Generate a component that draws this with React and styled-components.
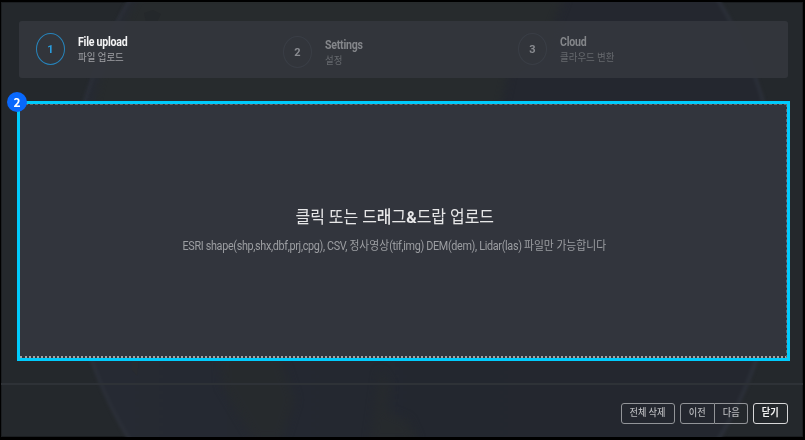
import React from "react";
import styled, { createGlobalStyle } from "styled-components";

const GlobalStyle = createGlobalStyle`
  * { box-sizing: border-box; }
  body { margin: 0; background: #000; }
`;

const Window = styled.main`
  position: relative;
  isolation: isolate;
  display: flex;
  flex-direction: column;
  width: 805px;
  height: 440px;
  border: solid #000;
  border-width: 2px 2px 3px 1px;
  background: #24282c;
  box-shadow: inset 0 0 0 1px #1b1e21;
  overflow: hidden;
  font-family: Roboto, "Noto Sans CJK KR", sans-serif;
`;

const Globe = styled.svg`
  position: absolute;
  z-index: -1;
  left: -1px;
  top: -2px;
`;

const Steps = styled.ol`
  display: grid;
  grid-template-columns: 247px 235px 1fr;
  width: 769px;
  height: 57px;
  margin: 19px 0 0 18px;
  padding: 0 0 0 17px;
  border-radius: 3px;
  background: rgba(51, 54, 60, 0.96);
  list-style: none;
  flex: none;
`;

const Step = styled.li`
  display: flex;
  align-items: flex-start;
  gap: 13px;
  padding-top: ${(p) => p.$top}px;
`;

const StepNumber = styled.span`
  display: flex;
  align-items: center;
  justify-content: center;
  width: 29px;
  height: 32px;
  border: ${(p) => (p.$active ? "1.5px solid #2785bd" : "1px solid #3a3e46")};
  border-radius: 50%;
  color: ${(p) => (p.$active ? "#2b9fe0" : "#898b90")};
  font-size: 11px;
  font-weight: 700;
`;

const StepText = styled.div`
  display: flex;
  flex-direction: column;
  padding-top: 2px;
`;

const StepTitle = styled.strong`
  color: ${(p) => (p.$active ? "#f4f4f5" : "#84868a")};
  font-size: 12px;
  line-height: 15px;
  font-weight: 700;
  letter-spacing: -0.25px;
  white-space: nowrap;
  transform: scaleX(0.88);
  transform-origin: left;
`;

const StepCaption = styled.span`
  color: ${(p) => (p.$active ? "#a0a1a5" : "#66696e")};
  font-size: 10.5px;
  line-height: 15px;
  white-space: nowrap;
  transform: scaleX(0.9);
  transform-origin: left;
`;

const DropArea = styled.section`
  position: relative;
  width: 773px;
  height: 260px;
  margin: 23px 0 0 16px;
  border: 3px solid #00cbfd;
  background: #32353d;
  flex: none;
`;

const DropTarget = styled.div`
  display: flex;
  flex-direction: column;
  align-items: center;
  width: 100%;
  height: 100%;
  padding: 99px 17px 0 0;
  border: 1px dashed #66686d;
  border-left: 0;
  border-bottom: 2px dotted #a5a5a5;
`;

const DropTitle = styled.h1`
  margin: 0;
  color: #e7e7e8;
  font-size: 17px;
  line-height: 26px;
  font-weight: 400;
  white-space: nowrap;
  transform: scaleX(0.938);
  b { font-weight: 500; }
  strong { font-weight: 700; }
`;

const DropCaption = styled.p`
  margin: 7px 0 0;
  color: #9c9ea2;
  font-size: 12px;
  line-height: 18px;
  white-space: nowrap;
  transform: scaleX(0.9);
`;

const Latin = styled.span`
  letter-spacing: -0.36px;
`;

const Badge = styled.span`
  position: absolute;
  left: -13px;
  top: -12px;
  width: 20px;
  height: 20px;
  border-radius: 50%;
  background: #0868fc;
  color: #fff;
  font: 700 12px/20px "Noto Sans CJK KR", sans-serif;
  text-align: center;
`;

const Footer = styled.footer`
  display: flex;
  justify-content: flex-end;
  align-items: flex-start;
  gap: 5px;
  margin-top: 22px;
  padding: 18px 15px 0 0;
  border-top: 2px solid #2e3237;
  flex: 1;
`;

const ButtonGroup = styled.div`
  display: flex;
`;

const Button = styled.button`
  display: flex;
  align-items: center;
  justify-content: center;
  width: ${(p) => p.$width}px;
  height: 21px;
  padding: 0 0 3px;
  border: 1px solid ${(p) => (p.$primary ? "#d7d7d8" : "#929498")};
  border-radius: 3px;
  background: transparent;
  color: ${(p) => (p.$primary ? "#f1f1f1" : "#b5b6b9")};
  font: ${(p) => (p.$primary ? 700 : 500)} 10px/16px "Noto Sans CJK KR", sans-serif;
  white-space: nowrap;
  ${ButtonGroup} &:first-child { border-radius: 3px 0 0 3px; }
  ${ButtonGroup} &:last-child { border-radius: 0 3px 3px 0; border-left: 0; }
`;

const ButtonLabel = styled.span`
  transform: scaleX(0.92);
`;

const steps = [
  { title: "File upload", caption: "파일 업로드", top: 12, active: true },
  { title: "Settings", caption: "설정", top: 15 },
  { title: "Cloud", caption: "클라우드 변환", top: 12 },
];

function GlobeBackdrop() {
  return (
    <Globe width="805" height="440" aria-hidden="true">
      <defs>
        <filter id="soft" colorInterpolationFilters="sRGB"><feGaussianBlur stdDeviation="1.5" /></filter>
        <filter id="land" x="-10%" y="-10%" width="120%" height="120%" colorInterpolationFilters="sRGB"><feGaussianBlur stdDeviation="4" /></filter>
        <linearGradient id="sea">
          <stop offset="0" stopColor="#262a33" />
          <stop offset="0.5" stopColor="#23272f" />
          <stop offset="1" stopColor="#24272f" />
        </linearGradient>
      </defs>
      <ellipse cx="424" cy="220" rx="356" ry="390" fill="url(#sea)" stroke="#2b2f38" strokeWidth="4" filter="url(#soft)" />
      <g fill="#272b2d" filter="url(#land)">
        <path d="M137 -5H565L545 45L510 65L500 110H92L100 76Z" />
        <path d="M220 350H278L295 400L282 440H255L222 385Z" opacity=".8" />
        <path d="M380 370L390 386L386 411L408 420L418 442H370Z" opacity=".8" />
      </g>
      <path d="M144 13l9-3 8 4-5 10-9 3z" fill="#23272a" opacity=".6" />
      <path d="M132 360l7 1-2 15-5-6z" fill="#292b2d" opacity=".5" />
    </Globe>
  );
}

export default function App() {
  return (
    <Window>
      <GlobalStyle />
      <GlobeBackdrop />
      <Steps>
        {steps.map((s, i) => (
          <Step key={s.title} $top={s.top}>
            <StepNumber $active={s.active}>{i + 1}</StepNumber>
            <StepText>
              <StepTitle $active={s.active}>{s.title}</StepTitle>
              <StepCaption $active={s.active}>{s.caption}</StepCaption>
            </StepText>
          </Step>
        ))}
      </Steps>
      <DropArea>
        <DropTarget>
          <DropTitle>클릭 또는 드<b>래</b>그<strong>&amp;</strong>드랍 업로드</DropTitle>
          <DropCaption>
            <Latin>ESRI shape(shp,shx,dbf,prj,cpg), CSV, </Latin>정사영상
            <Latin>(tif,img) DEM(dem), Lidar(las) </Latin>파일만 가능합니다
          </DropCaption>
        </DropTarget>
        <Badge>2</Badge>
      </DropArea>
      <Footer>
        <Button $width={54}><ButtonLabel>전체 삭제</ButtonLabel></Button>
        <ButtonGroup>
          <Button $width={35}><ButtonLabel>이전</ButtonLabel></Button>
          <Button $width={33}><ButtonLabel>다음</ButtonLabel></Button>
        </ButtonGroup>
        <Button $width={35} $primary><ButtonLabel>닫기</ButtonLabel></Button>
      </Footer>
    </Window>
  );
}
